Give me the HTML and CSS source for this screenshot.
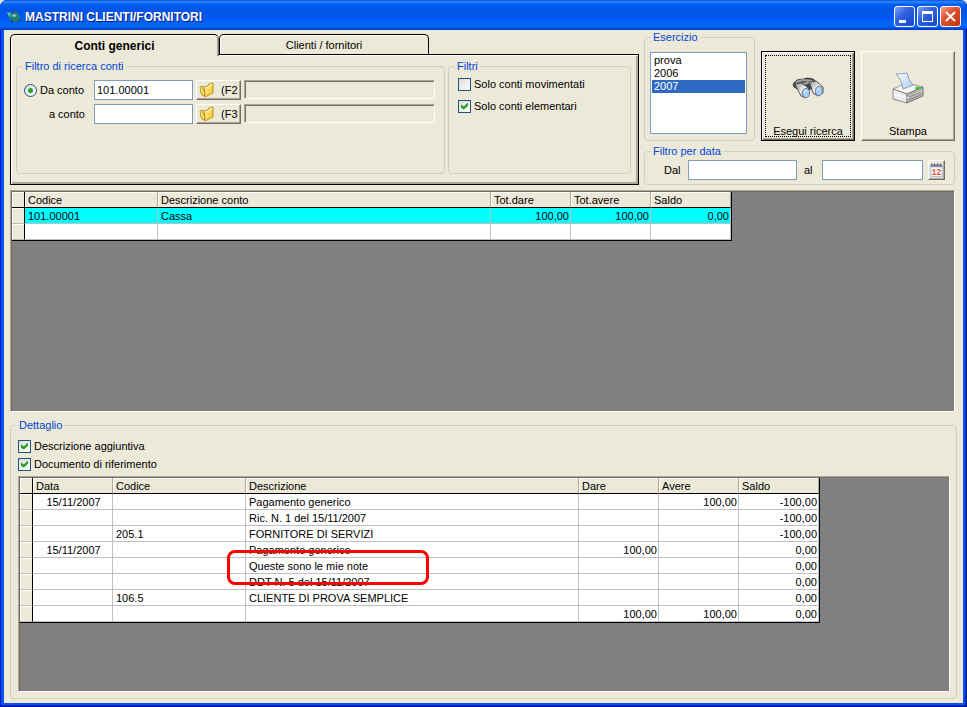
FILE: index.html
```html
<!DOCTYPE html>
<html lang="it">
<head>
    <meta charset="utf-8">
    <title>Mastrini clienti/fornitori</title>
    <link rel="stylesheet" href="styles.css">
</head>
<body>
<svg width="0" height="0" class="defs">
    <defs>
        <linearGradient id="gold" x1="0" y1="0" x2="1" y2="1">
            <stop offset="0" stop-color="#fff3a0"/>
            <stop offset="1" stop-color="#f3bd1c"/>
        </linearGradient>
        <linearGradient id="metal" x1="0" y1="0" x2="1" y2="1">
            <stop offset="0" stop-color="#8a8a8a"/>
            <stop offset=".5" stop-color="#f0f0f0"/>
            <stop offset="1" stop-color="#777"/>
        </linearGradient>
        <linearGradient id="sheet" x1="0" y1="0" x2="1" y2="1">
            <stop offset="0" stop-color="#ffffff"/>
            <stop offset="1" stop-color="#a9cdf5"/>
        </linearGradient>
    </defs>
    <symbol id="folder" viewBox="0 0 16 16">
        <path d="M1 5l3-1v2l2 7-2 1-2-3z" fill="#fbe07a" stroke="#c0901c"/>
        <path d="M5 5l4-1 1-2 4-1v10l-8 4z" fill="url(#gold)" stroke="#c0901c"/>
        <path d="M6 6l4-1 1-2 2-1" stroke="#fffbd8" fill="none"/>
    </symbol>
</svg>

<div class="window">
    <header class="titlebar">
        <svg class="app-icon" viewBox="0 0 16 16">
            <path d="M1 3l4 1 1 3-3 1z" fill="#5fb7a7"/>
            <path d="M3 8l3-4 5-1 3 4v4l-4 2-5-1z" fill="#1f7a78"/>
            <path d="M5 7l3-2 3 1-2 2z" fill="#7fd0b8"/>
            <path d="M4 11l3 1-1 2zM11 12l3-1v2z" fill="#35393d"/>
            <path d="M8 1l2 1-1 2z" fill="#a33c32"/>
        </svg>
        <h1>MASTRINI CLIENTI/FORNITORI</h1>
        <button class="win-btn" aria-label="Riduci"><svg viewBox="0 0 19 19"><path d="M4 13h7v3H4z" fill="#fff"/></svg></button>
        <button class="win-btn" aria-label="Ingrandisci"><svg viewBox="0 0 19 19"><path d="M4 4h11v11H4zM5 7v7h9V7z" fill="#fff" fill-rule="evenodd"/></svg></button>
        <button class="win-btn close" aria-label="Chiudi"><svg viewBox="0 0 19 19"><path d="M5 5l9 9M14 5l-9 9" stroke="#fff" stroke-width="2"/></svg></button>
    </header>

    <main>
        <section class="top">
            <div class="tabs">
                <div class="tab-row">
                    <button class="tab active">Conti generici</button>
                    <button class="tab">Clienti / fornitori</button>
                </div>
                <div class="tab-panel">
                    <fieldset class="search">
                        <legend>Filtro di ricerca conti</legend>
                        <div class="account-grid">
                            <label class="radio-label"><input type="radio" name="conto" checked> <span>Da conto</span></label>
                            <input type="text" value="101.00001" aria-label="Da conto">
                            <button class="btn pick"><svg viewBox="0 0 16 16"><use href="#folder"/></svg>(F2</button>
                            <output class="sunken"></output>
                            <label class="to-label" for="aConto">a conto</label>
                            <input type="text" id="aConto">
                            <button class="btn pick"><svg viewBox="0 0 16 16"><use href="#folder"/></svg>(F3</button>
                            <output class="sunken"></output>
                        </div>
                    </fieldset>
                    <fieldset class="filters">
                        <legend>Filtri</legend>
                        <label class="check"><input type="checkbox"> Solo conti movimentati</label>
                        <label class="check"><input type="checkbox" checked> Solo conti elementari</label>
                    </fieldset>
                </div>
            </div>

            <div class="side">
                <div class="side-row">
                    <fieldset class="years">
                        <legend>Esercizio</legend>
                        <select size="6" aria-label="Esercizio">
                            <option>prova</option>
                            <option>2006</option>
                            <option selected>2007</option>
                        </select>
                    </fieldset>
                    <button class="btn big default">
                        <svg viewBox="0 0 32 32">
                            <path d="M1 12l4-4 7-1 3-1 6 1 6 5-6 4-12 3-7-4z" fill="#555" stroke="#3a3a3a"/>
                            <path d="M4 10l7-2 9 1M9 13l9-3" stroke="#a0a0a0" stroke-width="2" fill="none"/>
                            <path d="M3 12l6-1 8 5v7l-4 3-4-2z" fill="url(#metal)" stroke="#555"/>
                            <path d="M17 10l7-1 7 6v6l-5 3-5-3z" fill="url(#metal)" stroke="#555"/>
                            <path d="M13 13l5-2 2 6-3 1z" fill="#4a4a4a"/>
                            <ellipse cx="14" cy="21" rx="3.500" ry="4.500" fill="#a4d2ff" stroke="#6d7f92"/>
                            <ellipse cx="27" cy="19" rx="3.500" ry="4.500" fill="#a4d2ff" stroke="#6d7f92"/>
                            <path d="M12 21l2-3M25 19l2-3" stroke="#e6f4ff"/>
                        </svg>
                        <span>Esegui ricerca</span>
                    </button>
                    <button class="btn big">
                        <svg viewBox="0 0 32 32">
                            <path d="M1 17l13-6 17 4-16 7z" fill="#f4f4f4" stroke="#999"/>
                            <path d="M4 2q6 0 11-1 1 7 6 12l-10 4q-1-9-7-15z" fill="url(#sheet)" stroke="#8aa0b8"/>
                            <path d="M1 17l14 5v9L1 27z" fill="#ececec" stroke="#8a8a8a"/>
                            <path d="M15 22l16-7v9l-16 7z" fill="#b4b4b4" stroke="#7d7d7d"/>
                            <path d="M2 22l13 4 15-7" stroke="#fafafa" fill="none"/>
                            <path d="M17 25l12-5M17 28l12-5" stroke="#858585"/>
                            <ellipse cx="26" cy="16" rx="3" ry="1.500" fill="#48c83c"/>
                        </svg>
                        <span>Stampa</span>
                    </button>
                </div>
                <fieldset class="dates">
                    <legend>Filtro per data</legend>
                    <div class="date-row">
                        <label for="dal">Dal</label>
                        <input type="text" id="dal">
                        <label class="to-date" for="al">al</label>
                        <input type="text" id="al">
                        <button class="btn calendar" aria-label="Calendario">
                            <svg viewBox="0 0 16 16">
                                <path d="M2 3h12v12H2z" fill="#fff" stroke="#a8b4d8"/>
                                <path d="M2 2h12v3H2z" fill="#8a8fa8"/>
                                <path d="M3 1v3M6 1v3M9 1v3M12 1v3" stroke="#4c5268"/>
                                <text x="8" y="13" text-anchor="middle">12</text>
                            </svg>
                        </button>
                    </div>
                </fieldset>
            </div>
        </section>

        <section class="data-area accounts">
            <table>
                <colgroup><col class="c-sel"><col class="c-code"><col class="c-desc"><col class="c-num"><col class="c-num"><col class="c-num"></colgroup>
                <thead>
                    <tr><th></th><th>Codice</th><th>Descrizione conto</th><th>Tot.dare</th><th>Tot.avere</th><th>Saldo</th></tr>
                </thead>
                <tbody>
                    <tr class="selected"><th></th><td>101.00001</td><td>Cassa</td><td class="num">100,00</td><td class="num">100,00</td><td class="num">0,00</td></tr>
                    <tr><th></th><td></td><td></td><td></td><td></td><td></td></tr>
                </tbody>
            </table>
        </section>

        <fieldset class="detail">
            <legend>Dettaglio</legend>
            <label class="check"><input type="checkbox" checked> Descrizione aggiuntiva</label>
            <label class="check"><input type="checkbox" checked> Documento di riferimento</label>
            <div class="data-area movements">
                <table>
                    <colgroup><col class="c-sel"><col class="c-num"><col class="c-code"><col class="c-desc"><col class="c-num"><col class="c-num"><col class="c-num"></colgroup>
                    <thead>
                        <tr><th></th><th>Data</th><th>Codice</th><th>Descrizione</th><th>Dare</th><th>Avere</th><th>Saldo</th></tr>
                    </thead>
                    <tbody>
                        <tr><th></th><td class="date">15/11/2007</td><td></td><td>Pagamento generico</td><td></td><td class="num">100,00</td><td class="num">-100,00</td></tr>
                        <tr><th></th><td></td><td></td><td>Ric. N. 1 del 15/11/2007</td><td></td><td></td><td class="num">-100,00</td></tr>
                        <tr><th></th><td></td><td>205.1</td><td>FORNITORE DI SERVIZI</td><td></td><td></td><td class="num">-100,00</td></tr>
                        <tr><th></th><td class="date">15/11/2007</td><td></td><td>Pagamento generico</td><td class="num">100,00</td><td></td><td class="num">0,00</td></tr>
                        <tr><th></th><td></td><td></td><td class="note">Queste sono le mie note<span class="marker"></span></td><td></td><td></td><td class="num">0,00</td></tr>
                        <tr><th></th><td></td><td></td><td>DDT N. 5 del 15/11/2007</td><td></td><td></td><td class="num">0,00</td></tr>
                        <tr><th></th><td></td><td>106.5</td><td>CLIENTE DI PROVA SEMPLICE</td><td></td><td></td><td class="num">0,00</td></tr>
                        <tr><th></th><td></td><td></td><td></td><td class="num">100,00</td><td class="num">100,00</td><td class="num">0,00</td></tr>
                    </tbody>
                </table>
            </div>
        </fieldset>
    </main>
</div>
</body>
</html>
```
FILE: styles.css
```css
* {
    box-sizing: border-box;
}
body {
    margin: 0;
    background: #ece9d8;
}
body, button, input, select {
    font-family: "Liberation Sans", Arial, sans-serif;
    font-size: 11px;
    line-height: 14px;
    color: #000;
}
.defs {
    position: absolute;
}

/* window frame */
.window {
    display: flex;
    flex-direction: column;
    min-height: 100vh;
    padding: 0 4px 4px;
    background: #0850e8;
    border-radius: 7px 7px 0 0;
    box-shadow: inset 1px 0 #0019cf, inset -1px -1px #00138c, inset -2px -2px #0831d9;
}
.titlebar {
    display: flex;
    align-items: center;
    gap: 2px;
    height: 30px;
    margin: 0 -4px;
    padding: 3px 6px 0;
    border-radius: 7px 7px 0 0;
    background: linear-gradient(#0a4fd8 0, #2f8cff 2px, #0060f0 4px, #0055e5 9px, #0058ee 18px, #0068ff 25px, #0062f5 27px, #0038c0 30px);
}
.app-icon {
    width: 16px;
    height: 16px;
}
h1 {
    flex: 1;
    margin: 0;
    padding-left: 1px;
    font-size: 12px;
    font-weight: bold;
    color: #fff;
    text-shadow: 1px 1px #0a1883;
}
.win-btn {
    width: 21px;
    height: 21px;
    padding: 0;
    border: 1px solid #fff;
    border-radius: 3px;
    background: linear-gradient(135deg, #7fa4f5, #2f62e0 40%, #1c48c8);
}
.win-btn svg {
    display: block;
    width: 19px;
    height: 19px;
}
.win-btn.close {
    background: linear-gradient(135deg, #f0a088, #e0532f 40%, #c23510);
}

main {
    flex: 1;
    display: flex;
    flex-direction: column;
    padding: 0 6px 4px;
    background: #ece9d8;
}

/* group boxes */
fieldset {
    min-width: 0;
    margin: 0;
    padding: 0;
    border: 1px solid #d0d0bf;
    border-radius: 4px;
}
legend {
    height: 14px;
    margin-left: 6px;
    padding: 0 2px;
    color: #0046d5;
}

/* form controls */
input[type="text"] {
    width: 100%;
    min-width: 0;
    height: 20px;
    padding: 0 2px;
    border: 1px solid #7f9db9;
    background: #fff;
}
input[type="checkbox"], input[type="radio"] {
    appearance: none;
    display: grid;
    place-items: center;
    flex: none;
    width: 13px;
    height: 13px;
    margin: 0;
    border: 1px solid #1d5281;
    background: linear-gradient(135deg, #dcdcd7, #fff);
}
input[type="checkbox"]:checked::before {
    content: "";
    width: 7px;
    height: 7px;
    background: #21a121;
    clip-path: polygon(0 28%, 40% 57%, 100% 0, 100% 46%, 40% 100%, 0 74%);
}
input[type="radio"] {
    border-radius: 50%;
}
input[type="radio"]:checked::before {
    content: "";
    width: 5px;
    height: 5px;
    border-radius: 50%;
    background: #21a121;
}
.check {
    display: flex;
    align-items: center;
    gap: 3px;
    height: 22px;
}
.btn {
    border: 1px solid;
    border-color: #fff #716f64 #716f64 #fff;
    background: #ece9d8;
    box-shadow: inset -1px -1px #aca899;
}

/* top area */
.top {
    display: flex;
    gap: 5px;
}
.tabs {
    flex: 1;
    display: flex;
    flex-direction: column;
    padding-top: 4px;
}
.tab-row {
    display: flex;
    height: 20px;
}
.tab {
    width: 210px;
    padding: 0;
    border: 1px solid #000;
    border-bottom: 0;
    border-radius: 5px 5px 0 0;
    background: #ece9d8;
    box-shadow: inset 1px 1px #fff;
}
.tab.active {
    z-index: 1;
    width: 209px;
    height: 22px;
    font-size: 12px;
    font-weight: bold;
    border-right-color: #716f64;
    box-shadow: inset 1px 1px #fff, inset -1px 0 #aca899;
}
.tab-panel {
    flex: 1;
    display: flex;
    gap: 3px;
    padding: 4px 7px 10px 5px;
    border: 1px solid #000;
    box-shadow: inset 1px 1px #fff, inset -2px -2px #aca899;
}
.search {
    flex: 1;
}
.account-grid {
    display: grid;
    grid-template-columns: 67px 99px 45px 1fr;
    gap: 4px 3px;
    padding: 7px 9px 0 7px;
}
.radio-label {
    display: flex;
    align-items: center;
    gap: 3px;
}
.to-label {
    padding: 3px 6px 0 0;
    text-align: right;
}
.pick {
    display: flex;
    align-items: center;
    gap: 6px;
    height: 20px;
    padding: 0 2px;
}
.pick svg {
    width: 16px;
    height: 16px;
}
.sunken {
    height: 19px;
    border: 1px solid;
    border-color: #aca899 #fff #fff #aca899;
    box-shadow: inset 1px 1px #716f64;
}
.filters {
    width: 183px;
}
.filters .check {
    margin-left: 9px;
}

.side {
    display: flex;
    flex-direction: column;
    gap: 3px;
    width: 311px;
    margin-right: 2px;
}
.side-row {
    display: flex;
    align-items: flex-end;
    gap: 6px;
}
.years {
    width: 111px;
    height: 111px;
}
.years select {
    display: block;
    width: 97px;
    height: 82px;
    margin: 8px 0 0 5px;
    padding: 1px;
    border: 1px solid #7f9db9;
    border-radius: 0;
    background: #fff;
    overflow: hidden;
    outline: 0;
}
.years option {
    min-height: 13px;
    padding: 0 2px;
    line-height: 13px;
}
.years option:checked {
    color: #fff;
    background: #316ac5 linear-gradient(#316ac5, #316ac5);
}
.big {
    flex: 1;
    display: flex;
    flex-direction: column;
    align-items: center;
    justify-content: flex-end;
    gap: 20px;
    height: 90px;
    padding: 0 0 2px;
}
.big svg {
    width: 32px;
    height: 32px;
}
.big.default {
    border-color: #000;
    box-shadow: inset 1px 1px #fff, inset -1px -1px #716f64, inset -2px -2px #aca899;
    outline: 1px dotted #000;
    outline-offset: -5px;
}
.date-row {
    display: grid;
    grid-template-columns: 24px 109px 25px 101px 22px;
    align-items: center;
    padding: 2px 0 4px 19px;
}
.to-date {
    padding-left: 7px;
}
.calendar {
    justify-self: end;
    width: 17px;
    height: 20px;
    padding: 0;
}
.calendar svg {
    display: block;
    width: 15px;
    height: 16px;
}
.calendar text {
    font-size: 9px;
    font-weight: bold;
    fill: #e8501c;
}

/* data grids */
.data-area {
    border: 1px solid;
    border-color: #aca899 #fff #fff #aca899;
    background: #808080;
    box-shadow: inset 1px 1px #716f64;
    padding: 1px 0 0 1px;
}
.accounts {
    flex: 1;
    margin: 5px 2px 6px 0;
}
table {
    table-layout: fixed;
    width: 0;
    border-collapse: separate;
    border-spacing: 0;
    border: 1px solid #000;
    border-width: 0 1px 1px 0;
    background: #fff;
}
.c-sel {
    width: 13px;
}
.c-num {
    width: 80px;
}
.c-code {
    width: 133px;
}
.c-desc {
    width: 333px;
}
th, td {
    height: 16px;
    padding: 0 1px 0 3px;
    border: 1px solid #c0c0c0;
    border-width: 0 1px 1px 0;
    font-weight: normal;
    text-align: left;
    white-space: nowrap;
}
th {
    background: #ece9d8;
    border-right-color: #aca899;
    box-shadow: inset 1px 1px #fff;
}
thead th {
    border-bottom-color: #000;
}
th:first-child {
    border-right-color: #000;
}
.selected td {
    background: #0ff;
}
td.num {
    text-align: right;
}
td.date {
    text-align: center;
}
.detail .check {
    height: 18px;
    margin-left: 7px;
}
.detail legend {
    margin-bottom: 5px;
}
.movements {
    height: 216px;
    margin: 3px 6px 6px 7px;
}
.note {
    position: relative;
}
.marker {
    position: absolute;
    top: -8px;
    left: -19px;
    width: 202px;
    height: 35px;
    border: 3px solid #f00;
    border-radius: 8px;
}
```
